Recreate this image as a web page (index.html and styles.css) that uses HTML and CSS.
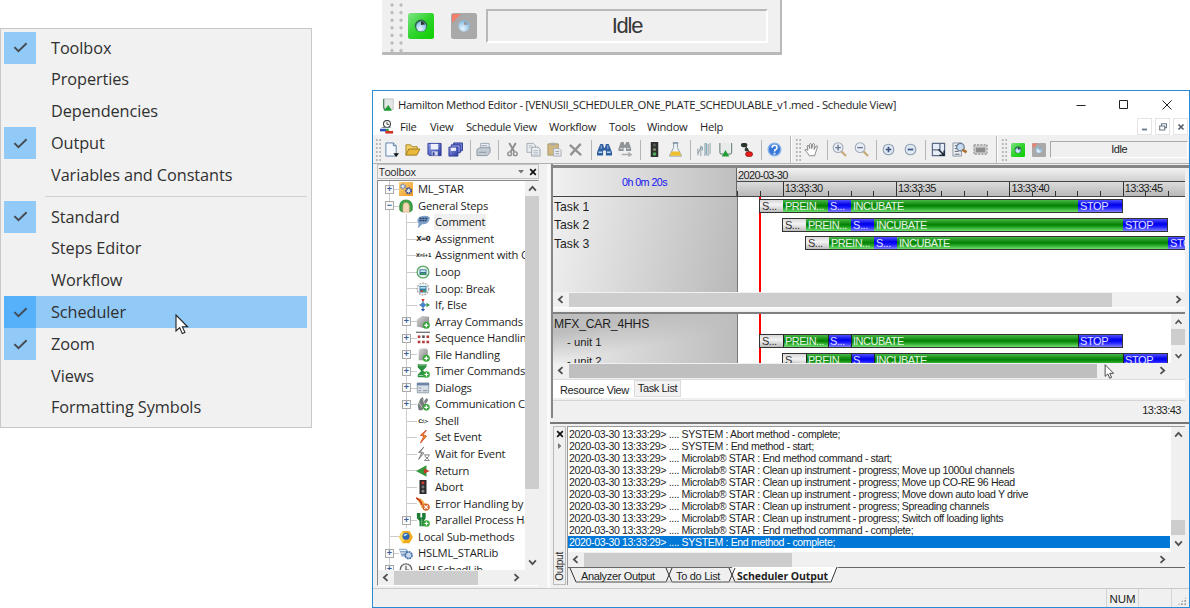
FILE: index.html
```html
<!DOCTYPE html>
<html lang="en">
<head>
<meta charset="utf-8">
<title>Hamilton Method Editor</title>
<link rel="stylesheet" href="styles.css">
</head>
<body>
<svg class="defs" aria-hidden="true">
  <defs>
    <linearGradient id="g-green" x1="0" y1="0" x2="1" y2="1"><stop offset="0" stop-color="#7fe487"/><stop offset=".5" stop-color="#2fd32c"/><stop offset="1" stop-color="#0cd000"/></linearGradient>
    <linearGradient id="g-orange" x1="0" y1="0" x2="1" y2="1"><stop offset="0" stop-color="#fbd27c"/><stop offset="1" stop-color="#ee9a25"/></linearGradient>
    <linearGradient id="g-blue" x1="0" y1="0" x2="1" y2="1"><stop offset="0" stop-color="#8fa0e8"/><stop offset="1" stop-color="#2b38a0"/></linearGradient>
    <linearGradient id="g-gray" x1="0" y1="0" x2="1" y2="1"><stop offset="0" stop-color="#d8d8d8"/><stop offset="1" stop-color="#7d7d7d"/></linearGradient>
    <radialGradient id="g-ball" cx=".4" cy=".7" r=".7"><stop offset="0" stop-color="#e8f6ff"/><stop offset="1" stop-color="#7fb6dd"/></radialGradient>
  </defs>
  <symbol id="check" viewBox="0 0 16 16"><path d="M1.500 7.500 5.800 12 14.500 3.500" fill="none" stroke="#444b52" stroke-width="2"/></symbol>
  <symbol id="cursor" viewBox="0 0 14 22"><path d="M1 1v16l3.700-3.400 2.600 6 2.600-1.200-2.500-5.600h5.200z" fill="#fff" stroke="#222" stroke-width="1.100"/></symbol>
  <symbol id="run" viewBox="0 0 26 26"><rect width="26" height="26" rx="2.500" fill="url(#g-green)"/><circle cx="13" cy="12.800" r="6.200" fill="#2c6a4a"/><circle cx="13.200" cy="13.600" r="5" fill="url(#g-ball)"/><path d="M13 12V8.500q3 0 4 3z" fill="#333"/></symbol>
  <symbol id="halt" viewBox="0 0 26 26"><rect width="26" height="26" rx="2.500" fill="#a9a9a9"/><path d="M1 1h9L1 10z" fill="#f0806a"/><circle cx="13" cy="13" r="5.700" fill="url(#g-ball)"/><path d="M13 12V8.500q3 0 4 3z" fill="#999"/></symbol>
  <symbol id="app" viewBox="0 0 16 16"><path d="M3 1h11v12H3z" fill="#e2e6e4" stroke="#aab2ae" stroke-width=".7"/><path d="M3 1v10l2 3" fill="none" stroke="#4d8a60" stroke-width="1.500"/><path d="M3 14.500 8.500 8l4 6.500z" fill="#1f9c33"/></symbol>
  <symbol id="sched" viewBox="0 0 16 16"><circle cx="8" cy="4.500" r="4" fill="#fff" stroke="#444" stroke-width="1.200"/><path d="M8 2v3h2.500" stroke="#333" fill="none"/><path d="M0 10h7v3H0z" fill="#2d50b8"/><path d="M7 10h3v3H7z" fill="#2e9c46"/><path d="M6 12.500h9v3H6z" fill="#cf3427"/><path d="M2 8.500h10" stroke="#678"/></symbol>
  <symbol id="new" viewBox="0 0 16 16"><path d="M2 1h8l3 3v11H2z" fill="#f5f9ff" stroke="#5b7fa6"/><path d="M10 1v3h3" fill="#bcd0e8" stroke="#5b7fa6"/><path d="M10 12h6l-3 4z" fill="#111"/></symbol>
  <symbol id="open" viewBox="0 0 16 16"><path d="M1 14V3h5l1.500 2H13v3" fill="#f4cf62" stroke="#a8842a"/><path d="M1 14 4 7.500h12L12.500 14z" fill="#e9b93a" stroke="#9b7722"/></symbol>
  <symbol id="save" viewBox="0 0 16 16"><path d="M1 1.500h14v13H2.500L1 13z" fill="url(#g-blue)" stroke="#2d3a96"/><path d="M4 2h8v6H4z" fill="#eef1fb"/><path d="M5 10h6.500v4.500H5z" fill="#d3d8ee"/><path d="M6 11h2v3.500H6z" fill="#2d3a96"/></symbol>
  <symbol id="saveall" viewBox="0 0 16 16"><path d="M6 1h9.500v8L11 11H6z" fill="#6d7bd2" stroke="#2d3a96"/><path d="M3.500 3H13v8.500H3.500z" fill="#8e9ae2" stroke="#2d3a96"/><path d="M1 5.500h9.500V15H1z" fill="url(#g-blue)" stroke="#2d3a96"/><path d="M3 6h5.500v3.500H3z" fill="#edf0fb"/></symbol>
  <symbol id="print" viewBox="0 0 16 16"><path d="M5 7V1.500h9V7" fill="#eef2f6" stroke="#9aa6b2"/><path d="M1 8l3-2h11v5l-3 3.500H1z" fill="#c2cad2" stroke="#8c98a4"/><path d="M3 11h8M6 4h6" stroke="#8c98a4"/></symbol>
  <symbol id="cut" viewBox="0 0 16 16"><path d="M4.500 1 10 10.500M11.500 1 6 10.500" stroke="#8d8d8d" stroke-width="2"/><circle cx="5" cy="12.500" r="2" fill="none" stroke="#8d8d8d" stroke-width="1.500"/><circle cx="11" cy="12.500" r="2" fill="none" stroke="#8d8d8d" stroke-width="1.500"/></symbol>
  <symbol id="copy" viewBox="0 0 16 16"><path d="M1 1.500h7l2 2V11H1z" fill="#e9edf1" stroke="#a3abb4"/><path d="M6 5.500h7l2 2V15H6z" fill="#e9edf1" stroke="#9aa3ad"/><path d="M8 9h5M8 11h5M8 13h5M3 4h4M3 6h2" stroke="#a9b2bb" stroke-width=".8"/></symbol>
  <symbol id="paste" viewBox="0 0 16 16"><path d="M1 2h11v12H1z" fill="#d2b980" stroke="#a6946b"/><path d="M4 .8h5v3H4z" fill="#aaa"/><path d="M7 7h6l2 2v6H7z" fill="#e9edf1" stroke="#a3abb4"/><path d="M9 10h4M9 12.500h4" stroke="#99a"/></symbol>
  <symbol id="del" viewBox="0 0 16 16"><path d="M2 3 14 14M13.500 2 2.500 14" stroke="#929292" stroke-width="2.400"/></symbol>
  <symbol id="find" viewBox="0 0 16 16"><path d="M3.500 2h3l1 4h1l1-4h3L16 11v3.500H9.500V9h-3v5.500H0V11z" fill="#2f5f9e"/><path d="M1.500 11h4M10.500 11h4" stroke="#b8d6f2" stroke-width="1.500"/><path d="M4.500 3.500v4M11.500 3.500v4" stroke="#94b8de"/></symbol>
  <symbol id="findnext" viewBox="0 0 16 16"><path d="M3 0h3l.8 3h1l.8-3h3l2.400 7v2.500H8.500V6H6v3.500H.5V7z" fill="#8f9498"/><path d="M2 7h3M9.500 7h3" stroke="#ddd"/><path d="M4 12.500h7v-2l4.500 3-4.500 2.500v-2H4z" fill="#aaa"/></symbol>
  <symbol id="traffic" viewBox="0 0 16 16"><path d="M4 0h8v16H4z" fill="#2d312e"/><circle cx="8" cy="3.200" r="1.700" fill="#565d58"/><circle cx="8" cy="8" r="1.700" fill="#7e8a6e"/><circle cx="8" cy="12.800" r="1.900" fill="#4fae5c"/></symbol>
  <symbol id="abort" viewBox="0 0 16 16"><path d="M4 0h8v16H4z" fill="#2a2a2a"/><circle cx="8" cy="3.200" r="1.900" fill="#c43a30"/><circle cx="8" cy="8" r="1.700" fill="#777"/><circle cx="8" cy="12.800" r="1.700" fill="#8a8a8a"/></symbol>
  <symbol id="flask" viewBox="0 0 16 16"><path d="M6 1h4v5l4.500 9h-13L6 6z" fill="#eef3f7" stroke="#8699ab"/><path d="M4 10h8l2.300 4.700H1.700z" fill="#f0c02f"/><path d="M5 1h6" stroke="#7c8fa0" stroke-width="1.500"/></symbol>
  <symbol id="tubes" viewBox="0 0 16 16"><path d="M2 7v7M5 4v11M9.500 1v14M13 2v13" stroke="#b3bcc0" stroke-width="1.700"/><path d="M6.700 5v4M11 1v13" stroke="#5a9ab5" stroke-width="1"/><path d="M6 5 2 12M15 1v12" stroke="#77868c" stroke-width=".8"/></symbol>
  <symbol id="deck" viewBox="0 0 16 16"><path d="M4 1h9v11H4z" fill="#e7ebe9"/><path d="M2 1v10q0 2 2 2h8.500q2 0 2-2V1" fill="none" stroke="#778a84" stroke-width="1.300"/><path d="m4 15.500 4-7 4 7z" fill="#239e35"/></symbol>
  <symbol id="nodes" viewBox="0 0 16 16"><path d="M6 3.500 11 11" stroke="#222" stroke-width="1.200"/><rect x="2" y="1" width="7" height="4.500" rx="2.200" fill="#27352b"/><rect x="6" y="6" width="4" height="4" rx="2" fill="#303b31"/><rect x="7" y="10.500" width="7.500" height="5" rx="2.500" fill="#ea1b1b" stroke="#7b1212" stroke-width=".7"/></symbol>
  <symbol id="help" viewBox="0 0 16 16"><circle cx="8" cy="8" r="6.700" fill="#3a78d8" stroke="#87b3ea" stroke-width="1.500"/><path d="M5.500 6q0-2.500 2.600-2.500T10.600 6q0 1.300-1.300 2T8 10" fill="none" stroke="#fff" stroke-width="1.700"/><path d="M7 11.500h2v1.700H7z" fill="#fff"/></symbol>
  <symbol id="hand" viewBox="0 0 18 16"><path d="M6 15q-2.500-4-5-6.500Q2 7 4.500 9L3.500 4q1-1.500 2 0L6.500 7 6.300 2q1-1.600 2 0L8.800 7l1-5.300q1.300-1.200 1.900.3L11.400 8l2.200-4q1.500-.8 1.500.6-.6 3-2.200 7.400L12 15z" fill="#fff" stroke="#777" stroke-width=".95"/></symbol>
  <symbol id="zin" viewBox="0 0 16 16"><path d="m10 10 5 5" stroke="#c9ab7c" stroke-width="2.300"/><circle cx="6.500" cy="6" r="5.200" fill="#e8eef5" stroke="#a3abb8" stroke-width="1.200"/><path d="M3.500 6h6M6.500 3v6" stroke="#6b7894" stroke-width="1.500"/></symbol>
  <symbol id="zout" viewBox="0 0 16 16"><path d="m10 10 5 5" stroke="#c9ab7c" stroke-width="2.300"/><circle cx="6.500" cy="6" r="5.200" fill="#e8eef5" stroke="#a3abb8" stroke-width="1.200"/><path d="M3.500 6h6" stroke="#6b7894" stroke-width="1.500"/></symbol>
  <symbol id="plus" viewBox="0 0 16 16"><circle cx="8" cy="8" r="5.700" fill="#dfe8f2" stroke="#8a9aae" stroke-width="1.100"/><path d="M5 8h6M8 5v6" stroke="#3b5480" stroke-width="1.800"/></symbol>
  <symbol id="minus" viewBox="0 0 16 16"><circle cx="8" cy="8" r="5.700" fill="#dfe8f2" stroke="#8a9aae" stroke-width="1.100"/><path d="M5 8h6" stroke="#3b5480" stroke-width="1.800"/></symbol>
  <symbol id="fit" viewBox="0 0 16 16"><path d="M1.500 1.500h13v13h-13z" fill="#e8eef7" stroke="#5a6a83" stroke-width="1.300"/><path d="M9.500 1.500v7h-8" fill="none" stroke="#5a6a83" stroke-width="1.300"/><path d="m8 8 6 6M14 9v5H9" stroke="#1e2b3d" stroke-width="1.600" fill="none"/></symbol>
  <symbol id="preview" viewBox="0 0 16 16"><path d="M1 1h9v14H1z" fill="#edf0f4" stroke="#8a94a1"/><path d="M3 4h4M3 7h3M3 10h4M3 13h5" stroke="#555f6c"/><circle cx="9" cy="5.500" r="4" fill="#c5dcf2" stroke="#6c7c92" stroke-width="1.300"/><path d="m11 8 4.500 3" stroke="#a86f31" stroke-width="2.800"/></symbol>
  <symbol id="film" viewBox="0 0 16 16"><path d="M1 3h14v10H1z" fill="#ccc" stroke="#a2a2a2" stroke-dasharray="2 1.500" stroke-width="1.500"/><path d="M3 6h10v5H3z" fill="#8c8c8c"/></symbol>
  <symbol id="gears" viewBox="0 0 16 16"><path d="M0 0h16v16H0z" fill="url(#g-orange)"/><circle cx="4.500" cy="5" r="2.500" fill="#dfe6f2" stroke="#7386ad" stroke-width="1.700" stroke-dasharray="1.800 .7"/><circle cx="11" cy="10" r="2.900" fill="#dfe6f2" stroke="#394f90" stroke-width="2" stroke-dasharray="2 .6"/></symbol>
  <symbol id="general" viewBox="0 0 16 16"><path d="M1 13Q-1 1 8 1t7 12l-3 2V8L8 4 4 9v6z" fill="#3da444" stroke="#26752e" stroke-width=".7"/><path d="M4.500 15V8Q4.500 4 8 4t3.800 4v7z" fill="#f6d6b3" stroke="#c6a078" stroke-width=".6"/></symbol>
  <symbol id="comment" viewBox="0 0 16 16"><path d="M4 2q9-3 12 1-1 4-3 6-3 2-6 1.500l-5 5 1-5.500Q-.5 6 4 2z" fill="#7d9fc8"/><path d="M4 4h9M4 6.500h8" stroke="#243e66" stroke-width="1.500" stroke-dasharray="2.500 .7"/></symbol>
  <symbol id="loop" viewBox="0 0 16 16"><circle cx="8" cy="8" r="6.700" fill="#edf6ee" stroke="#5aa86b" stroke-width="1.600"/><path d="M4 5h8v6.500H4z" fill="#336b9c"/><path d="M5 6h6v2H5z" fill="#cde8f5"/><path d="M5 9h6v2H5z" fill="#41a255"/></symbol>
  <symbol id="brk" viewBox="0 0 16 16"><circle cx="8" cy="8" r="6.700" fill="#f3f3f3" stroke="#959b9e" stroke-width="1.300" stroke-dasharray="2 1.300"/><path d="M4 4.500h8V12H4z" fill="#357ba9"/><path d="M5 5.500h6v2H5z" fill="#bfe0f0"/><path d="M5 9.500h3v2H5z" fill="#c1463a"/><path d="M8 9.500h3v2H8z" fill="#41a255"/></symbol>
  <symbol id="if" viewBox="0 0 16 16"><path d="M8 2v11M4 8h8" stroke="#5e7896" stroke-width="1.500"/><path d="m6 1 2 3 2-3z" fill="#d32f2f"/><circle cx="8" cy="8" r="2.600" fill="#3f86cf"/><path d="m12 5.500 4 2.500-4 2.500z" fill="#3a9b48"/><path d="m5.500 12.500 2.500 3 2.500-3z" fill="#2556ad"/></symbol>
  <symbol id="array" viewBox="0 0 16 16"><path d="m1 5 6-4 8 1v9l-5 4-9-2z" fill="url(#g-gray)"/><circle cx="11.800" cy="11.800" r="4" fill="#35a637"/><path d="M9.500 11.800h4.600M11.800 9.500v4.600" stroke="#fff" stroke-width="1.500"/></symbol>
  <symbol id="file" viewBox="0 0 16 16"><path d="M3 2l3-1.500h6l1.500 2V14H3z" fill="url(#g-gray)"/><circle cx="11.800" cy="11.800" r="4" fill="#35a637"/><path d="M9.500 11.800h4.600M11.800 9.500v4.600" stroke="#fff" stroke-width="1.500"/></symbol>
  <symbol id="seq" viewBox="0 0 16 16"><path d="M0 1.500h16" stroke="#777" stroke-width="1.600"/><path d="M2 5h3v3H2zM12 5h3v3h-3zM2 11h3v3H2zM7 11h3v3H7zM12 11h3v3h-3z" fill="#b23a34"/><path d="M7 5h3v3H7z" fill="#555"/></symbol>
  <symbol id="timer" viewBox="0 0 16 16"><path d="M2 0h10v3L8 7.500l4 4V15H2v-3l4-4L2 4z" fill="#2d9042"/><path d="M3 1h8M3 13h6" stroke="#bfe0c4"/><circle cx="12" cy="12" r="3.800" fill="#35a637"/><path d="M9.800 12h4.400M12 9.800v4.400" stroke="#fff" stroke-width="1.400"/></symbol>
  <symbol id="dialog" viewBox="0 0 16 16"><path d="M1.500 2.500h13v11h-13z" fill="#d8dee6" stroke="#8c98a5"/><path d="M1 2h14v3H1z" fill="#6d84a5"/><path d="M3 8h3M3 11h3M8 11h5" stroke="#949da8" stroke-width="1.300"/></symbol>
  <symbol id="comm" viewBox="0 0 16 16"><path d="m5 2 3-2 1 5 3-4 2 2-4 7-3 5H3L2 9z" fill="#777c7d"/><path d="m3 6 4 6M8 3l2 5" stroke="#d5d5d5"/><circle cx="11.800" cy="11.800" r="3.800" fill="#35a637"/><path d="M9.500 11.800h4.600M11.800 9.500v4.600" stroke="#fff" stroke-width="1.400"/></symbol>
  <symbol id="event" viewBox="0 0 16 16"><path d="M12 0 5 6l4 1-4 8 7-8-4-1.500z" fill="#f2a71b" stroke="#cf4321"/></symbol>
  <symbol id="wait" viewBox="0 0 16 16"><path d="M9 0 3 6l3.500 1L3 14l6-7-4-1.500z" fill="#c9c9c9" stroke="#777"/><path d="M9.500 9h6M9.500 15.500h6M10.500 9v2l2 1.500-2 2v1M14.500 9v2l-2 1.500 2 2v1" stroke="#777" fill="none"/></symbol>
  <symbol id="ret" viewBox="0 0 16 16"><path d="M0 8 12 1.500v13z" fill="#33973b"/><path d="m9 5 6.500 3L9 11z" fill="#c33a25"/></symbol>
  <symbol id="error" viewBox="0 0 16 16"><path d="M0 1q5-1 8 3t4 8l-5 1Q4 6 0 1z" fill="#f2b04a"/><path d="M0 1q5 2 7 8" stroke="#c8301b" stroke-width="1.700" fill="none"/><circle cx="11.500" cy="11.500" r="4.200" fill="#d4662b"/><path d="m9.500 9.500 4 4M13.500 9.500l-4 4" stroke="#fff" stroke-width="1.400"/></symbol>
  <symbol id="parallel" viewBox="0 0 16 16"><path d="M1 0h4v5h2V0h4v6L9 9v6H4V9L1 6z" fill="#1e7c35"/><path d="M6.500 7v8" stroke="#88c795"/><circle cx="12" cy="12" r="3.800" fill="#35a637"/><path d="M9.800 12h4.400M12 9.800v4.400" stroke="#fff" stroke-width="1.400"/></symbol>
  <symbol id="local" viewBox="0 0 16 16"><path d="M4 1h8l4 7-4 7H4L0 8z" fill="#f1ad22"/><path d="M4 1 0 8l4 7 4-7z" fill="#ffd75e"/><circle cx="8" cy="7" r="4" fill="#2b67b6"/><path d="M5 6q2-3 5-1-2 1-3 2z" fill="#b8dcff"/></symbol>
  <symbol id="lib" viewBox="0 0 16 16"><path d="M0 3h8l2 2v7H3z" fill="#87a5c9"/><path d="M1 5h7M2 8h6" stroke="#e5eef8" stroke-width="1.200"/><circle cx="11" cy="10.500" r="3.800" fill="#c6d9ef" stroke="#3f6ca4" stroke-width="2" stroke-dasharray="2.200 .7"/></symbol>
  <symbol id="clock" viewBox="0 0 16 16"><circle cx="8" cy="7.500" r="6.500" fill="#f5f5f5" stroke="#666" stroke-width="1.500"/><path d="M8 3v5h3.500" fill="none" stroke="#555" stroke-width="1.300"/></symbol>
  <symbol id="left" viewBox="0 0 8 8"><path d="M5.800 1 2.500 4l3.300 3" fill="none" stroke="#505050" stroke-width="1.600"/></symbol>
  <symbol id="right" viewBox="0 0 8 8"><path d="M2.200 1 5.500 4 2.200 7" fill="none" stroke="#505050" stroke-width="1.600"/></symbol>
  <symbol id="up" viewBox="0 0 8 8"><path d="M1 5.800 4 2.500l3 3.300" fill="none" stroke="#505050" stroke-width="1.600"/></symbol>
  <symbol id="down" viewBox="0 0 8 8"><path d="M1 2.200 4 5.500l3-3.300" fill="none" stroke="#505050" stroke-width="1.600"/></symbol>
  <symbol id="x" viewBox="0 0 8 8"><path d="m1.200 1.200 5.600 5.600M6.800 1.200 1.200 6.800" stroke="#111" stroke-width="1.700"/></symbol>
</svg>

<div class="page">
  <div class="popup">
    <div class="opt on"><span class="tick"><svg><use href="#check"/></svg></span>Toolbox</div>
    <div class="opt"><span class="tick"></span>Properties</div>
    <div class="opt"><span class="tick"></span>Dependencies</div>
    <div class="opt on"><span class="tick"><svg><use href="#check"/></svg></span>Output</div>
    <div class="opt"><span class="tick"></span>Variables and Constants</div>
    <div class="divider"></div>
    <div class="opt on"><span class="tick"><svg><use href="#check"/></svg></span>Standard</div>
    <div class="opt"><span class="tick"></span>Steps Editor</div>
    <div class="opt"><span class="tick"></span>Workflow</div>
    <div class="opt on hot"><span class="tick"><svg><use href="#check"/></svg></span>Scheduler</div>
    <div class="opt on"><span class="tick"><svg><use href="#check"/></svg></span>Zoom</div>
    <div class="opt"><span class="tick"></span>Views</div>
    <div class="opt"><span class="tick"></span>Formatting Symbols</div>
    <svg class="cursor cursor-menu"><use href="#cursor"/></svg>
  </div>

  <div class="side">
    <div class="floatbar">
      <span class="biggrip"></span>
      <svg class="bigicon"><use href="#run"/></svg>
      <svg class="bigicon"><use href="#halt"/></svg>
      <span class="bigwell">Idle</span>
    </div>

    <div class="window">
      <div class="titlebar">
        <svg class="i16"><use href="#app"/></svg>
        <span class="title">Hamilton Method Editor - [VENUSII_SCHEDULER_ONE_PLATE_SCHEDULABLE_v1.med - Schedule View]</span>
        <svg class="winctl" viewBox="0 0 96 12"><path d="M.5 6.500h9M43.500 1.500h8v8h-8zM86.500 1.500l9 9M95.500 1.500l-9 9" fill="none" stroke="#222"/></svg>
      </div>
      <div class="menubar">
        <svg class="i16"><use href="#sched"/></svg>
        <span class="mb-file">File</span><span class="mb-view">View</span><span class="mb-sv">Schedule View</span><span class="mb-wf">Workflow</span><span class="mb-tools">Tools</span><span class="mb-win">Window</span><span>Help</span>
        <div class="mdi">
          <span><svg viewBox="0 0 8 8"><path d="M1 6.500h5" stroke="#677687" stroke-width="1.800"/></svg></span>
          <span><svg viewBox="0 0 8 8"><path d="M2.500 2.500V.8h5v3.800H6M.7 3h5v4h-5z" fill="none" stroke="#677687" stroke-width="1.100"/></svg></span>
          <span><svg viewBox="0 0 8 8"><path d="m1.500 1.500 5 5M6.500 1.500l-5 5" stroke="#55606c" stroke-width="1.700"/></svg></span>
        </div>
      </div>
      <div class="toolbar">
        <span class="grip"></span>
        <div class="tg">
          <svg><use href="#new"/></svg><svg><use href="#open"/></svg><svg><use href="#save"/></svg><svg><use href="#saveall"/></svg><i></i>
          <svg><use href="#print"/></svg><i></i>
          <svg><use href="#cut"/></svg><svg><use href="#copy"/></svg><svg><use href="#paste"/></svg><svg><use href="#del"/></svg><i></i>
          <svg><use href="#find"/></svg><svg><use href="#findnext"/></svg><i></i>
          <svg><use href="#traffic"/></svg><svg><use href="#flask"/></svg><i></i>
          <svg><use href="#tubes"/></svg><svg><use href="#deck"/></svg><svg><use href="#nodes"/></svg><i></i>
          <svg><use href="#help"/></svg>
        </div>
        <span class="band"></span><span class="grip"></span>
        <div class="tg tg-zoom">
          <svg class="wide"><use href="#hand"/></svg><i></i>
          <svg><use href="#zin"/></svg><svg><use href="#zout"/></svg><i></i>
          <svg><use href="#plus"/></svg><svg><use href="#minus"/></svg><i></i>
          <svg><use href="#fit"/></svg><svg><use href="#preview"/></svg><svg><use href="#film"/></svg>
        </div>
        <span class="band band-2"></span><span class="grip"></span>
        <div class="tg tg-run"><svg><use href="#run"/></svg><svg><use href="#halt"/></svg></div>
        <span class="well">Idle</span>
      </div>

      <div class="main">
        <div class="toolbox">
          <div class="tb-head"><span>Toolbox</span><svg class="tri" viewBox="0 0 6 4"><path d="M0 0h6L3 3.500z" fill="#777"/></svg><svg class="i8"><use href="#x"/></svg></div>
          <div class="tb-box">
            <div class="tb-top">
              <div class="tree">
                <div class="row l0"><b class="ex">+</b><svg><use href="#gears"/></svg><span>ML_STAR</span></div>
                <div class="row l0"><b class="ex">−</b><svg><use href="#general"/></svg><span>General Steps</span></div>
                <div class="row l1"><b></b><svg><use href="#comment"/></svg><span class="cur">Comment</span></div>
                <div class="row l1"><b></b><em>X=0</em><span>Assignment</span></div>
                <div class="row l1"><b></b><em class="tiny">X=i+1</em><span>Assignment with C</span></div>
                <div class="row l1"><b></b><svg><use href="#loop"/></svg><span>Loop</span></div>
                <div class="row l1"><b></b><svg><use href="#brk"/></svg><span>Loop: Break</span></div>
                <div class="row l1"><b></b><svg><use href="#if"/></svg><span>If, Else</span></div>
                <div class="row l1"><b class="ex">+</b><svg><use href="#array"/></svg><span>Array Commands</span></div>
                <div class="row l1"><b class="ex">+</b><svg><use href="#seq"/></svg><span>Sequence Handlin</span></div>
                <div class="row l1"><b class="ex">+</b><svg><use href="#file"/></svg><span>File Handling</span></div>
                <div class="row l1"><b class="ex">+</b><svg><use href="#timer"/></svg><span>Timer Commands</span></div>
                <div class="row l1"><b class="ex">+</b><svg><use href="#dialog"/></svg><span>Dialogs</span></div>
                <div class="row l1"><b class="ex">+</b><svg><use href="#comm"/></svg><span>Communication C</span></div>
                <div class="row l1"><b></b><em class="tiny">C:\&gt;</em><span>Shell</span></div>
                <div class="row l1"><b></b><svg><use href="#event"/></svg><span>Set Event</span></div>
                <div class="row l1"><b></b><svg><use href="#wait"/></svg><span>Wait for Event</span></div>
                <div class="row l1"><b></b><svg><use href="#ret"/></svg><span>Return</span></div>
                <div class="row l1"><b></b><svg><use href="#abort"/></svg><span>Abort</span></div>
                <div class="row l1"><b></b><svg><use href="#error"/></svg><span>Error Handling by</span></div>
                <div class="row l1 last"><b class="ex">+</b><svg><use href="#parallel"/></svg><span>Parallel Process Ha</span></div>
                <div class="row l0"><b></b><svg><use href="#local"/></svg><span>Local Sub-methods</span></div>
                <div class="row l0"><b class="ex">+</b><svg><use href="#lib"/></svg><span>HSLML_STARLib</span></div>
                <div class="row l0"><b class="ex">+</b><svg><use href="#clock"/></svg><span>HSLSchedLib</span></div>
              </div>
              <div class="vs vs-tree"><svg><use href="#up"/></svg><span></span><svg><use href="#down"/></svg></div>
            </div>
            <div class="hs hs-tree"><svg><use href="#left"/></svg><span></span><svg><use href="#right"/></svg></div>
          </div>
        </div>

        <div class="work">
          <div class="sched">
            <div class="s-head">
              <div class="elapsed">0h 0m 20s</div>
              <div class="ruler">
                <div class="date">2020-03-30</div>
                <div class="ticks"><u></u><u></u><u class="maj">13:33:30</u><u></u><u></u><u></u><u></u><u class="maj">13:33:35</u><u></u><u></u><u></u><u></u><u class="maj">13:33:40</u><u></u><u></u><u></u><u></u><u class="maj">13:33:45</u><u></u><u></u></div>
              </div>
            </div>
            <div class="pane tasks">
              <div class="names"><p>Task 1</p><p>Task 2</p><p>Task 3</p></div>
              <div class="chart">
                <div class="now"></div>
                <div class="bar" style="margin-left:21px"><span class="s">S...</span><span class="g">PREIN...</span><span class="b">S...</span><span class="g inc" style="width:227px">INCUBATE</span><span class="b stop">STOP</span></div>
                <div class="bar" style="margin-left:44px"><span class="s">S...</span><span class="g">PREIN...</span><span class="b">S...</span><span class="g inc" style="width:249px">INCUBATE</span><span class="b stop">STOP</span></div>
                <div class="bar" style="margin-left:67px"><span class="s">S...</span><span class="g">PREIN...</span><span class="b">S...</span><span class="g inc" style="width:271px">INCUBATE</span><span class="b stop">STOP</span></div>
              </div>
            </div>
            <div class="hs hs-tasks"><svg><use href="#left"/></svg><span></span><svg><use href="#right"/></svg></div>
            <div class="split"></div>
            <div class="lower">
              <div class="lower-main">
                <div class="pane units">
                  <div class="names"><p>MFX_CAR_4HHS</p><p class="in">- unit 1</p><p class="in">- unit 2</p></div>
                  <div class="chart">
                    <div class="now"></div>
                    <div class="bar cut" style="margin-left:21px"><span class="s">S...</span><span class="g">PREIN...</span><span class="b">S...</span><span class="g inc" style="width:227px">INCUBATE</span><span class="b stop">STOP</span></div>
                    <div class="bar cut" style="margin-left:44px"><span class="s">S...</span><span class="g">PREIN...</span><span class="b">S...</span><span class="g inc" style="width:249px">INCUBATE</span><span class="b stop">STOP</span></div>
                  </div>
                </div>
                <div class="hs hs-units"><svg><use href="#left"/></svg><span></span><svg><use href="#right"/></svg></div>
              </div>
              <div class="vs vs-units"><svg><use href="#up"/></svg><span></span><svg><use href="#down"/></svg></div>
              <svg class="cursor cursor-units"><use href="#cursor"/></svg>
            </div>
            <div class="views"><span class="act">Resource View</span><span class="idle">Task List</span></div>
            <div class="clockbar">13:33:43</div>
          </div>

          <div class="output">
            <div class="o-strip"><svg class="i8"><use href="#x"/></svg><svg class="tri-r" viewBox="0 0 4 6"><path d="M0 0v6l3.500-3z" fill="#777"/></svg><span>Output</span></div>
            <div class="o-body">
              <div class="o-top">
                <div class="log">
                  <p>2020-03-30 13:33:29&gt; .... SYSTEM : Abort method - complete;</p>
                  <p>2020-03-30 13:33:29&gt; .... SYSTEM : End method - start;</p>
                  <p>2020-03-30 13:33:29&gt; .... Microlab® STAR : End method command - start;</p>
                  <p>2020-03-30 13:33:29&gt; .... Microlab® STAR : Clean up instrument - progress; Move up 1000ul channels</p>
                  <p>2020-03-30 13:33:29&gt; .... Microlab® STAR : Clean up instrument - progress; Move up CO-RE 96 Head</p>
                  <p>2020-03-30 13:33:29&gt; .... Microlab® STAR : Clean up instrument - progress; Move down auto load Y drive</p>
                  <p>2020-03-30 13:33:29&gt; .... Microlab® STAR : Clean up instrument - progress; Spreading channels</p>
                  <p>2020-03-30 13:33:29&gt; .... Microlab® STAR : Clean up instrument - progress; Switch off loading lights</p>
                  <p>2020-03-30 13:33:29&gt; .... Microlab® STAR : End method command - complete;</p>
                  <p class="sel">2020-03-30 13:33:29&gt; .... SYSTEM : End method - complete;</p>
                </div>
                <div class="vs vs-log"><svg><use href="#up"/></svg><span></span><svg><use href="#down"/></svg></div>
              </div>
              <div class="hs hs-log"><svg><use href="#left"/></svg><span></span><svg><use href="#right"/></svg></div>
              <div class="o-tabs">
                <svg class="slants" viewBox="0 0 280 17"><path d="M164 0h106l-6 14H170z" fill="#fff"/><path d="M2 1l6 14h90l6-14M98 1l6 14M104 15h57l6-14M161 1l6 14h96l6-15" fill="none" stroke="#333"/><path d="M8 15h255" stroke="#aaa"/></svg>
                <span class="t1">Analyzer Output</span><span class="t2">To do List</span><span class="t3">Scheduler Output</span>
              </div>
            </div>
          </div>
        </div>
      </div>
      <div class="statusbar"><span class="num">NUM</span><span class="cell"></span><span class="sizer"></span></div>
    </div>
  </div>
</div>
</body>
</html>
```
FILE: styles.css
```css
* { box-sizing: border-box; }
body { margin: 0; width: 1190px; height: 608px; overflow: hidden; background: #fff; font-family: "Open Sans", "Noto Sans", sans-serif; color: #1e1e1e; }
p { margin: 0; }
.defs { position: absolute; width: 0; height: 0; }
.page { display: flex; height: 608px; }

/* context menu */
.popup { position: relative; flex: none; width: 312px; height: 400px; margin-top: 28px; padding: 3px 3px 0 3px; background: #f1f1f1; border: 1.500px solid #c8c8c8; font-size: 16.300px; line-height: 29px; letter-spacing: -.08px; color: #303030; }
.opt { display: flex; align-items: center; height: 31.800px; width: 303px; gap: 15px; white-space: nowrap; padding-top: .6px; }
.tick { flex: none; width: 32px; height: 31.800px; margin-top: -.6px; display: flex; align-items: center; justify-content: center; }
.tick svg { width: 15px; height: 15px; }
.opt.on .tick { background: #91c9f7; }
.opt.hot { background: #91c9f7; }
.opt.hot .tick { background: #56b0fa; }
.divider { height: 1px; margin: 5px 0 4px 41px; width: 262px; background: #cfcfcf; }
.cursor { position: absolute; width: 14px; height: 22px; }
.cursor-menu { left: 174px; top: 285px; }

.side { margin-left: 60px; width: 818px; flex: none; display: flex; flex-direction: column; }

/* undocked toolbar */
.floatbar { flex: none; width: 400px; height: 55px; margin: 0 0 35px 10px; background: #f0f0f0; border-right: 2px solid #b9b9b9; border-bottom: 3px solid #b9b9b9; display: flex; align-items: center; }
.biggrip { width: 15px; height: 52px; margin: 0 4px 0 7px; background: radial-gradient(circle at 3px 5px, #bcbcbc 1.300px, transparent 2px) 0 0 / 9px 7.600px; }
.bigicon { width: 26px; height: 26px; margin-right: 17px; }
.bigwell { width: 282px; height: 34px; margin-left: -8px; border: 2px solid; border-color: #b8b8b8 #fff #fff #b8b8b8; text-align: center; font: 22px/29px "Liberation Sans", sans-serif; letter-spacing: -1.200px; color: #383838; }

.window { flex: none; height: 518px; border: 1px solid #2a8ad4; background: #f0f0f0; display: flex; flex-direction: column; }
.i16 { width: 14px; height: 14px; flex: none; }
.i8 { width: 8px; height: 8px; flex: none; }
.titlebar { height: 28px; background: #fff; display: flex; align-items: center; padding: 0 17px 0 8px; }
.title { margin-left: 3px; font-size: 11.300px; letter-spacing: -.37px; white-space: nowrap; }
.winctl { width: 96px; height: 12px; margin-left: auto; }
.menubar { height: 17px; background: #fff; display: flex; align-items: center; padding-left: 7px; font-size: 11.200px; letter-spacing: -.3px; white-space: nowrap; }
.menubar > .i16 { margin-right: 6px; }
.menubar > span { flex: none; }
.mb-file { width: 30px; } .mb-view { width: 36px; } .mb-sv { width: 83px; } .mb-wf { width: 60px; } .mb-tools { width: 38px; } .mb-win { width: 53px; }
.mdi { margin-left: auto; display: flex; gap: 3px; padding-right: 1px; }
.mdi span { width: 15px; height: 17px; border: 1px solid #e4e4e4; display: flex; align-items: center; justify-content: center; }
.mdi svg { width: 8px; height: 8px; }

.toolbar { height: 29px; background: #f0f0f0; border-bottom: 1px solid #b0b0b0; display: flex; align-items: center; padding: 1px 0 0 2px; }
.grip { flex: none; width: 6px; height: 24px; background: radial-gradient(circle, #b4b4b4 .8px, transparent 1.200px) 0 0 / 3.500px 4px; }
.tg { display: flex; align-items: center; height: 22px; flex: none; }
.tg svg { width: 15px; height: 15px; margin: 0 3.120px; }
.tg i { width: 1px; height: 20px; margin: 0 2.270px 0 4px; background: #b5b5b5; }
.tg svg.wide { width: 16px; margin: 0 2.600px; }
.tg-zoom i { margin-right: 1.700px; }
.band { flex: none; width: 2px; height: 27px; margin: 0 3px 0 5px; border-left: 1px solid #b5b5b5; border-right: 1px solid #fff; }
.tg-run svg { width: 14px; height: 14px; margin: 0 3.600px; }
.well { flex: 1; height: 17px; margin: 0 1px 0 1px; border: 1px solid; border-color: #aaa #fff #fff #aaa; text-align: center; font: 11px/15px "Liberation Sans", sans-serif; letter-spacing: -.4px; }

.main { display: flex; height: 424px; }

/* toolbox tree */
.toolbox { width: 177px; flex: none; padding: 0 8px 0 4px; border-right: 3px solid #fafafa; }
.tb-head { height: 15px; display: flex; align-items: center; padding: 0 1px 0 1px; border: 1px solid #c2c2c2; font-size: 10.500px; letter-spacing: -.4px; }
.tri { width: 6px; height: 4px; margin: 0 5px 0 auto; }
.tb-box { height: 406px; margin-top: 1px; border: 1px solid #8a8a8a; border-right-color: #eee; border-bottom-color: #fff; }
.tb-top { display: flex; height: 389px; background: #f0f0f0; }
.tree { width: 147px; flex: none; background: #fff; overflow: hidden; font-size: 11.200px; letter-spacing: -.2px; white-space: nowrap; }
.row { height: 16.550px; display: flex; align-items: center; background-repeat: no-repeat; }
.row b { flex: none; width: 9px; height: 9px; margin-right: 5px; }
.row .ex { border: 1px solid #a9a9a9; background: #fafafa; font: bold 9px/7px "Liberation Sans", sans-serif; text-align: center; color: #3b5b9a; letter-spacing: 0; }
.row svg, .row em { flex: none; width: 14px; height: 14px; margin-right: 4px; }
.row em { font: bold 7px/14px "DejaVu Sans", sans-serif; letter-spacing: -.8px; text-align: center; }
.row em.tiny { font-size: 5px; letter-spacing: -.5px; }
.row span { padding: 0 1px; line-height: 16px; }
.row .cur { background: #f0f0f0; }
.l0 { padding-left: 7px; background-image: linear-gradient(90deg, #ccc, #ccc), linear-gradient(#ccc, #ccc); background-size: 10px 1px, 1px 100%; background-position: 11px 8px, 11px 0; }
.l1 { padding-left: 24px; background-image: linear-gradient(#ccc, #ccc), linear-gradient(#ccc, #ccc), linear-gradient(#ccc, #ccc); background-size: 10px 1px, 1px 100%, 1px 100%; background-position: 29px 8px, 28px 0, 11px 0; }

/* scroll bars */
.hs { display: flex; align-items: center; height: 15px; background: #f0f0f0; }
.hs svg, .vs svg { flex: none; width: 9px; height: 9px; }
.hs svg { margin: 0 4px 0 3px; }
.hs span { height: 14px; background: #cdcdcd; }
.hs svg:last-child { margin-left: auto; }
.hs-tasks svg:last-child { margin-right: 2px; }
.vs { display: flex; flex-direction: column; align-items: center; width: 14px; background: #f0f0f0; }
.vs svg { margin: 3px 0; }
.vs svg:last-child { margin-top: auto; }
.vs span { width: 14px; background: #cdcdcd; }
.vs-tree span { height: 293px; }
.hs-tree { width: 161px; }
.hs-tree span { width: 84px; }
.hs-tree svg:last-child { margin-right: 18px; }

/* schedule */
.work { width: 639px; flex: none; }
.sched { height: 254px; margin-left: 1px; padding: 2px 4px 0 0; border-left: 2px solid #868686; background: linear-gradient(#868686, #868686) 0 1px / 100% 3px no-repeat #f0f0f0; }
.s-head { display: flex; height: 29px; margin-top: 2px; border-bottom: 1px solid #444; }
.elapsed { width: 184px; background: linear-gradient(90deg, #f0f0f0, #cfcfcf 70%, #bfbfbf); text-align: center; font: 10.700px/29px "Liberation Sans", sans-serif; letter-spacing: -.55px; color: #1414f0; border-right: 1px solid #666; }
.ruler { flex: 1; overflow: hidden; font: 11px/14px "Liberation Sans", sans-serif; letter-spacing: -.65px; }
.date { height: 13px; padding-left: 1px; background: linear-gradient(#f2f2f2, #d0d0d0); }
.ticks { height: 15px; border-top: 1px solid #444; display: flex; align-items: flex-end; background: linear-gradient(#dcdcdc, #b9b9b9); padding-left: .4px; }
.ticks u { flex: none; width: 22.680px; height: 5px; border-left: 1px solid #333; text-decoration: none; white-space: nowrap; }
.ticks .maj { height: 14px; line-height: 13px; padding-left: 1px; }
.pane { display: flex; overflow: hidden; }
.tasks { height: 95px; }
.names { width: 185px; flex: none; border-right: 1px solid #777; background: linear-gradient(100deg, #f0f0f0, #dadada 40%, #b9b9b9); font: 12.200px/18.500px "Liberation Sans", sans-serif; padding: .5px 0 0 1px; }
.names .in { padding-left: 13px; font-size: 11.300px; }
.units .names p:first-child { letter-spacing: -.2px; }
.chart { position: relative; flex: 1; background: #fff; overflow: hidden; padding-top: 2px; }
.now { position: absolute; left: 20.500px; top: 0; bottom: 0; width: 2px; background: #f00; }
.bar { position: relative; display: flex; width: fit-content; height: 14px; margin-bottom: 4.500px; border: 1px solid #333; font: 11px/13px "Liberation Sans", sans-serif; letter-spacing: -.5px; color: #e4f3e4; white-space: nowrap; }
.bar span { flex: none; width: 23px; padding-left: 2px; overflow: hidden; }
.bar .s { background: linear-gradient(#d8d8d8, #f3f3f3 40%, #bdbdbd); color: #333; }
.bar .g { width: 45px; background: linear-gradient(#46b846, #078307 45%, #0a8c0a 55%, #6fe06f); }
.bar .b { background: linear-gradient(#5050ff, #0000e8 40%, #1414ff 60%, #8080ff); color: #e0e0ff; letter-spacing: -.4px; }
.bar .stop { width: 44px; }
.cut span + span { border-left: 1px solid #222; padding-left: 1px; }
.hs-tasks span { width: 543px; }
.split { height: 7px; background: linear-gradient(#fff, #eee 5px, #808080 5px); }
.lower { display: flex; height: 65px; position: relative; }
.lower-main { flex: 1; }
.units { height: 49px; }
.units .names { background: linear-gradient(170deg, #bebebe 25%, transparent 60%), linear-gradient(90deg, #ececec, #bcbcbc); }
.units .chart { padding-top: 20px; }
.hs-units span { width: 528px; background: #bfbfbf; }
.hs-units svg:last-child { margin-right: 4px; }
.vs-units { height: 49px; }
.vs-units span { height: 16px; }
.vs-units svg { margin: 4px 0 3px; height: 8px; }
.cursor-units { left: 551px; top: 50px; width: 11px; height: 16px; }
.views { height: 19px; display: flex; align-items: flex-start; background: #fff; border-top: 1px solid #ddd; font: 11px/17px "Liberation Sans", sans-serif; letter-spacing: -.38px; }
.views .act { width: 81px; padding: 2px 0 0 7px; white-space: nowrap; }
.views .idle { width: 47px; height: 17px; line-height: 15px; text-align: center; background: #f2f2f2; border: 1px solid #dcdcdc; }
.clockbar { height: 20px; margin-top: 2px; border-top: 1px solid #d5d5d5; text-align: right; font: 11px/19px "Liberation Sans", sans-serif; letter-spacing: -.5px; padding-right: 4px; }

/* output */
.output { height: 166px; margin-top: 4px; padding: 2px 4px 0 3px; border-top: 2px solid #777; display: flex; }
.o-strip { width: 13px; height: 159px; margin-right: 1px; border: 1px solid #bbb; display: flex; flex-direction: column; align-items: center; padding-top: 3px; font: 10px/11px "Liberation Sans", sans-serif; }
.tri-r { width: 4px; height: 6px; margin-top: 5px; }
.o-strip span { margin-top: auto; margin-bottom: 3px; writing-mode: vertical-rl; transform: rotate(180deg); letter-spacing: -.2px; }
.o-body { width: 618px; height: 159px; border-top: 1px solid #999; border-left: 1px solid #999; }
.o-top { display: flex; height: 125px; }
.log { flex: 1; background: #fff; padding-top: .6px; font: 10.600px/12px "Liberation Sans", sans-serif; letter-spacing: -.37px; white-space: nowrap; overflow: hidden; }
.log p { height: 12px; padding-left: 1px; }
.log .sel { background: #0078d7; color: #fff; margin-right: 1px; }
.vs-log { padding-bottom: 1px; }
.vs-log span { height: 15px; margin-top: 78px; }
.hs-log span { width: 208px; }
.hs-log svg:last-child { margin-right: 18px; }
.o-tabs { position: relative; display: flex; height: 17px; border-top: 1.500px solid #666; font-size: 10.500px; line-height: 16px; white-space: nowrap; }
.slants { position: absolute; left: 0; top: -1px; width: 280px; height: 17px; }
.o-tabs span { position: relative; flex: none; }
.t1 { width: 95px; margin-left: 13px; font-family: "Liberation Sans", sans-serif; font-size: 11px; letter-spacing: -.35px; }
.t2 { width: 61px; font-family: "Liberation Sans", sans-serif; font-size: 11px; letter-spacing: -.3px; }
.t3 { font-weight: 700; letter-spacing: -.1px; }

.statusbar { height: 19px; display: flex; border-top: 1px solid #c9c9c9; font: 11.500px/20px "Liberation Sans", sans-serif; padding-left: 733px; }
.num { width: 33px; text-align: center; border-left: 1px solid #d4d4d4; border-right: 1px solid #d4d4d4; }
.cell { width: 33px; border-right: 1px solid #d4d4d4; }
.sizer { width: 10px; height: 10px; margin: 7px 0 0 5px; background: radial-gradient(circle, #999 .8px, transparent 1.200px) 0 0 / 3.300px 3.300px; clip-path: polygon(100% 0, 100% 100%, 0 100%); }
```
